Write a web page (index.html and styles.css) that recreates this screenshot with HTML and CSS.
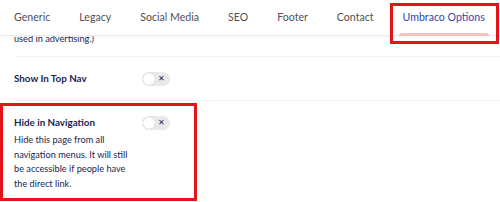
FILE: index.html
```html
<!DOCTYPE html>
<html lang="en">
<head>
<meta charset="utf-8">
<title>Umbraco Options</title>
<link rel="stylesheet" href="styles.css">
</head>
<body>
<div class="page">
  <header class="tabs">
    <span class="tab">Generic</span>
    <span class="tab">Legacy</span>
    <span class="tab">Social Media</span>
    <span class="tab">SEO</span>
    <span class="tab">Footer</span>
    <span class="tab">Contact</span>
    <span class="tab active">Umbraco Options</span>
  </header>
  <main class="content">
    <div class="prev">
      <p class="prev-text">used in advertising.)</p>
    </div>
    <div class="prop">
      <div class="prop-head">
        <div class="label">Show In Top Nav</div>
      </div>
      <div class="editor">
        <span class="toggle"><span class="knob"></span><span class="x">&#x2715;</span></span>
      </div>
    </div>
    <div class="prop last">
      <div class="prop-head">
        <div class="label">Hide in Navigation</div>
        <div class="desc">Hide this page from all navigation menus. It will still be accessible if people have the direct link.</div>
      </div>
      <div class="editor">
        <span class="toggle"><span class="knob"></span><span class="x">&#x2715;</span></span>
      </div>
    </div>
  </main>
  <div class="mark mark-tab"></div>
  <div class="mark mark-prop"></div>
</div>
</body>
</html>
```

FILE: styles.css
```css
* { box-sizing: border-box; }
html, body { margin: 0; padding: 0; background: #fff; }
body {
  font-family: Lato, "Open Sans", sans-serif;
  color: #1b264f;
  width: 500px;
  height: 202px;
  overflow: hidden;
}
.page { position: relative; width: 500px; height: 202px; overflow: hidden; }

.tabs {
  display: flex;
  gap: 29px;
  height: 36px;
  padding: 0 0 0 14px;
  border-bottom: 1px solid #ececee;
  box-shadow: 0 1px 2px rgba(0,0,0,0.04);
  position: relative;
  z-index: 2;
  background: #fff;
}
.tab {
  position: relative;
  font-size: 10.6px;
  line-height: 14px;
  padding-top: 10px;
  color: #515054;
  white-space: nowrap;
}
.tab.active { color: #3544b1; }
.tab.active::after {
  content: "";
  position: absolute;
  left: -4px;
  right: -4px;
  top: 33px;
  height: 3px;
  border-radius: 3px 3px 0 0;
  background: #f5c1bc;
}

.content { padding: 0 0 0 14px; }
.prev {
  height: 21px;
  overflow: hidden;
  border-bottom: 1px solid #f3f3f5;
}
.prev-text {
  margin: -4px 0 0;
  font-size: 9.2px;
  line-height: 14px;
  color: #1b264f;
}

.prop {
  display: grid;
  grid-template-columns: 128px auto;
  padding: 14px 0 14px;
  border-bottom: 1px solid #f3f3f5;
}
.prop.last { border-bottom: 0; padding-top: 14px; }
.label {
  font-size: 9.8px;
  font-weight: 700;
  line-height: 14px;
  color: #1b264f;
}
.desc {
  margin-top: 4px;
  width: 120px;
  font-size: 9.2px;
  line-height: 14.5px;
  color: #1b264f;
}
.editor { padding-top: 1px; }
.toggle {
  position: relative;
  display: block;
  width: 28px;
  height: 14px;
  border-radius: 7px;
  background: #e9e9eb;
}
.knob {
  position: absolute;
  left: 1px;
  top: 1px;
  width: 12px;
  height: 12px;
  border-radius: 50%;
  background: #fff;
  box-shadow: 0 0 1px rgba(0,0,0,0.25);
}
.x {
  position: absolute;
  left: 16px;
  top: 0;
  font-size: 8px;
  line-height: 14px;
  font-weight: 700;
  color: #1b264f;
  font-family: "DejaVu Sans", sans-serif;
}

.mark {
  position: absolute;
  border: 3px solid #e3141c;
  z-index: 5;
}
.mark-tab { left: 390px; top: 3px; width: 109px; height: 41px; }
.mark-prop { left: 0; top: 103px; width: 197px; height: 98px; }
```
